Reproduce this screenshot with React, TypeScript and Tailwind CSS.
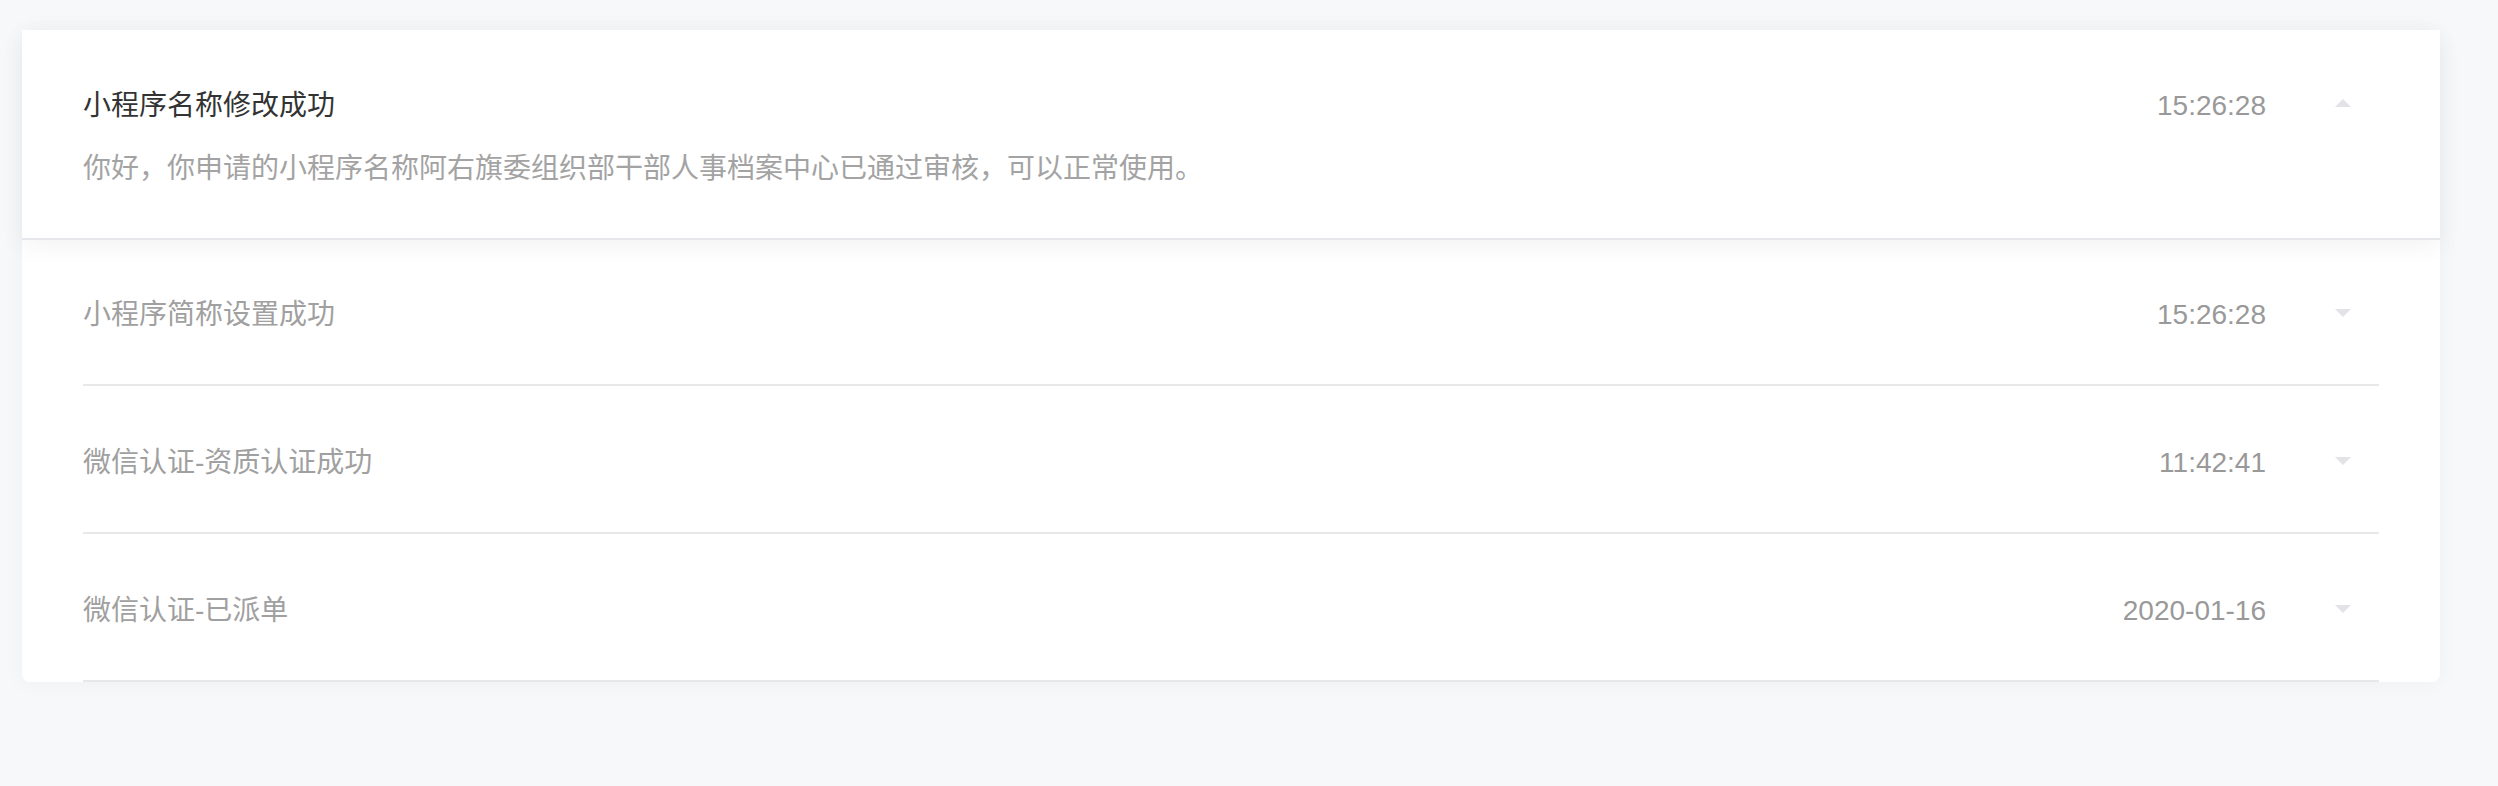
import { useState } from 'react'

interface Notice {
    title: string
    time: string
    body?: string
}

const notices: Notice[] = [
    {
        title: '小程序名称修改成功',
        time: '15:26:28',
        body: '你好，你申请的小程序名称阿右旗委组织部干部人事档案中心已通过审核，可以正常使用。',
    },
    { title: '小程序简称设置成功', time: '15:26:28' },
    { title: '微信认证-资质认证成功', time: '11:42:41' },
    { title: '微信认证-已派单', time: '2020-01-16' },
]

const cjk = { fontFamily: '"Liberation Sans", "Noto Sans CJK SC", sans-serif' }

function Caret({ up }: { up: boolean }) {
    return (
        <svg width="16" height="8" viewBox="0 0 16 8" className={up ? 'mt-[-6px]' : 'mt-[-4px]'}>
            {up ? <polygon points="0,8 8,0 16,8" fill="#e2e2e7" /> : <polygon points="0,0 16,0 8,8" fill="#e2e2e7" />}
        </svg>
    )
}

export default function App() {
    const [open, setOpen] = useState(0)

    return (
        <div className="min-h-screen bg-[#f7f8fa] pt-[30px]" style={cjk}>
            <div className="ml-[22px] w-[2418px] rounded-[8px] bg-white shadow-[0_0_24px_rgba(0,0,0,0.04)]">
                {notices.map((n, i) =>
                    i === open ? (
                        <div
                            key={i}
                            onClick={() => setOpen(-1)}
                            className="relative z-10 bg-white px-[61px] pt-[58px] pb-[51px] shadow-[0_2px_0_#e6e7eb,0_8px_24px_rgba(0,0,0,0.05)]"
                        >
                            <div className="flex items-center text-[28px] leading-[36px]">
                                <span className="flex-1 text-[#333]">{n.title}</span>
                                <span className="text-[#999]">{n.time}</span>
                                <span className="ml-[69px] mr-[28px] flex items-center">
                                    <Caret up />
                                </span>
                            </div>
                            <p className="mt-[27px] text-[28px] leading-[36px] text-[#a3a3a3]">{n.body}</p>
                        </div>
                    ) : (
                        <div key={i} onClick={() => setOpen(i)} className="px-[61px]">
                            <div className="flex h-[148px] items-center border-b-2 border-[#e8e8ea] pt-[8px] text-[28px] leading-[36px]">
                                <span className="flex-1 text-[#a0a0a0]">{n.title}</span>
                                <span className="text-[#999]">{n.time}</span>
                                <span className="ml-[69px] mr-[28px] flex items-center">
                                    <Caret up={false} />
                                </span>
                            </div>
                        </div>
                    )
                )}
            </div>
        </div>
    )
}
